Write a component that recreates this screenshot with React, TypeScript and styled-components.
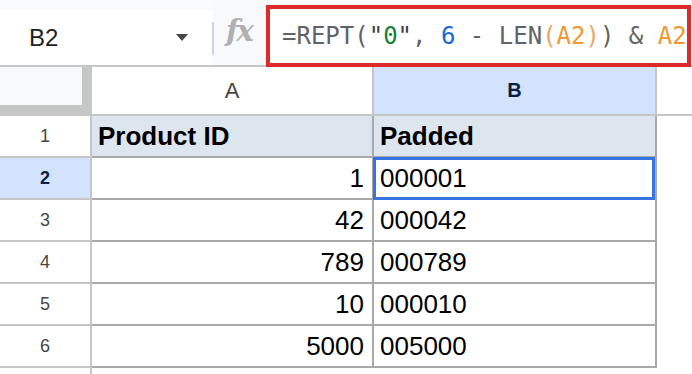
import styled, { createGlobalStyle, css } from "styled-components";

const GlobalStyle = createGlobalStyle`
  html, body {
    margin: 0;
    padding: 0;
    background: #ffffff;
  }
  body {
    width: 692px;
    height: 374px;
    overflow: hidden;
    font-family: "Liberation Sans", Arial, sans-serif;
  }
`;

// last row is only partly visible, so its number sits below the fold
const rows = [
  { id: "1", a: "Product ID", b: "Padded", head: true },
  { id: "2", a: "1", b: "000001", active: true },
  { id: "3", a: "42", b: "000042" },
  { id: "4", a: "789", b: "000789" },
  { id: "5", a: "10", b: "000010" },
  { id: "6", a: "5000", b: "005000" },
  { id: "", a: "", b: "", blank: true },
];

const formula: [string, string][] = [
  ["=REPT(", "#5f6368"],
  ['"', "#3c4043"],
  ["0", "#188038"],
  ['"', "#3c4043"],
  [", ", "#5f6368"],
  ["6", "#1967d2"],
  [" - LEN", "#5f6368"],
  ["(", "#e9a766"],
  ["A2", "#f0982e"],
  [")", "#e9a766"],
  [") & ", "#5f6368"],
  ["A2", "#f0982e"],
];

export default function App() {
  return (
    <>
      <GlobalStyle />
      <Page>
        <Toolbar>
          <NameBox>
            <NameText>B2</NameText>
            <Caret />
          </NameBox>
          <Divider />
          <FxArea>
            <FxGlyph>fx</FxGlyph>
          </FxArea>
          <FormulaBox>
            {formula.map(([t, c], i) => (
              <Token key={i} $color={c}>
                {t}
              </Token>
            ))}
          </FormulaBox>
        </Toolbar>

        <Grid>
          <Corner />
          <ColHead>A</ColHead>
          <ColHead $active>B</ColHead>
          <HeadFiller />

          {rows.map((r, i) => (
            <Row key={i} {...r} />
          ))}
        </Grid>
      </Page>
    </>
  );
}

function Row({
  id,
  a,
  b,
  head,
  active,
  blank,
}: {
  id: string;
  a: string;
  b: string;
  head?: boolean;
  active?: boolean;
  blank?: boolean;
}) {
  return (
    <>
      <RowNum $active={active}>{id}</RowNum>
      <Cell $head={head} $right={!head} $blank={blank}>
        {a}
      </Cell>
      <Cell $head={head} $selected={active} $blank={blank}>
        {b}
      </Cell>
      <Filler />
    </>
  );
}

const Page = styled.div`
  width: 692px;
  height: 374px;
  overflow: hidden;
`;

const Toolbar = styled.div`
  display: flex;
  align-items: flex-end;
  height: 65px;
  background: #f9fbfd;
`;

const NameBox = styled.div`
  display: flex;
  align-items: center;
  justify-content: space-between;
  box-sizing: border-box;
  width: 212px;
  height: 55px;
  padding: 0 24px 0 29px;
  background: #ffffff;
`;

const NameText = styled.span`
  font-size: 24px;
  color: #1f1f1f;
`;

const Caret = styled.span`
  width: 0;
  height: 0;
  border-left: 6px solid transparent;
  border-right: 6px solid transparent;
  border-top: 7px solid #444746;
`;

const Divider = styled.div`
  align-self: flex-start;
  width: 2px;
  height: 33px;
  margin-top: 22px;
  background: #c9d5e6;
`;

const FxArea = styled.div`
  display: flex;
  align-items: center;
  justify-content: center;
  width: 52px;
  height: 65px;
  background: #f8f9fa;
`;

const FxGlyph = styled.span`
  font-family: "DejaVu Serif", "Liberation Serif", serif;
  font-style: italic;
  font-weight: bold;
  font-size: 29px;
  letter-spacing: -2px;
  color: #b0b0b0;
  margin: -4px 0 0 -2px;
`;

const FormulaBox = styled.div`
  position: relative;
  z-index: 2;
  align-self: flex-start;
  display: flex;
  align-items: center;
  box-sizing: border-box;
  flex: 1;
  height: 62px;
  margin: 5px 1px -2px 0;
  padding-left: 12px;
  border: 4px solid #da2a2a;
  background: #ffffff;
  white-space: pre;
  font-family: "DejaVu Sans Mono", "Liberation Mono", monospace;
  font-size: 24px;
`;

const Token = styled.span<{ $color: string }>`
  color: ${(p) => p.$color};
`;

const Grid = styled.div`
  display: grid;
  grid-template-columns: 92px 282px 283px 1fr;
  border-top: 2px solid #c4c7c5;
`;

const Corner = styled.div`
  box-sizing: border-box;
  height: 49px;
  background: #f8f9fa;
  border-right: 10px solid #c4c7c5;
  border-bottom: 11px solid #c4c7c5;
`;

const ColHead = styled.div<{ $active?: boolean }>`
  display: flex;
  align-items: center;
  justify-content: center;
  box-sizing: border-box;
  height: 49px;
  border-right: 2px solid #c4c7c5;
  border-bottom: 2px solid #c4c7c5;
  background: ${(p) => (p.$active ? "#d3e3fd" : "#ffffff")};
  color: ${(p) => (p.$active ? "#0b1f47" : "#444746")};
  font-size: ${(p) => (p.$active ? "20px" : "22px")};
  font-weight: ${(p) => (p.$active ? "bold" : "normal")};
`;

const HeadFiller = styled.div`
  border-bottom: 2px solid #c4c7c5;
`;

const RowNum = styled.div<{ $active?: boolean }>`
  display: flex;
  align-items: center;
  justify-content: center;
  box-sizing: border-box;
  height: 42px;
  border-right: 2px solid #c4c7c5;
  border-bottom: 2px solid #c4c7c5;
  font-size: 18px;
  background: ${(p) => (p.$active ? "#d3e3fd" : "#ffffff")};
  color: ${(p) => (p.$active ? "#0b1f47" : "#444746")};
  font-weight: ${(p) => (p.$active ? "bold" : "normal")};
`;

const Cell = styled.div<{
  $head?: boolean;
  $right?: boolean;
  $selected?: boolean;
  $blank?: boolean;
}>`
  position: relative;
  display: flex;
  align-items: center;
  justify-content: ${(p) => (p.$right ? "flex-end" : "flex-start")};
  box-sizing: border-box;
  height: 42px;
  padding: 0 8px 0 6px;
  border-right: 2px solid ${(p) => (p.$blank ? "transparent" : "#a9a9a9")};
  border-bottom: 2px solid #a9a9a9;
  background: ${(p) => (p.$head ? "#dde5ef" : "#ffffff")};
  color: #000000;
  font-size: 26px;
  font-weight: ${(p) => (p.$head ? "bold" : "normal")};
  white-space: nowrap;

  ${(p) =>
    p.$selected &&
    css`
      &::after {
        content: "";
        position: absolute;
        z-index: 1;
        top: -1px;
        left: -1px;
        right: 0;
        bottom: -2px;
        border: 3px solid #3574e3;
      }
    `}
`;

const Filler = styled.div`
  height: 42px;
`;
